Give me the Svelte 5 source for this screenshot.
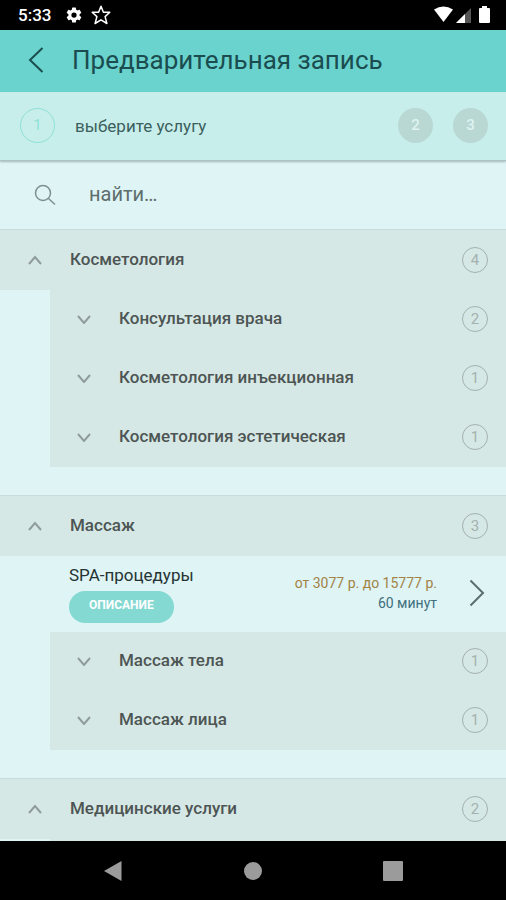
<script>
  let query = $state('');

  const groups = [
    {
      title: 'Косметология',
      count: 4,
      services: [],
      children: [
        { title: 'Консультация врача', count: 2 },
        { title: 'Косметология инъекционная', count: 1 },
        { title: 'Косметология эстетическая', count: 1 }
      ]
    },
    {
      title: 'Массаж',
      count: 3,
      services: [
        { title: 'SPA-процедуры', price: 'от 3077 р. до 15777 р.', time: '60 минут' }
      ],
      children: [
        { title: 'Массаж тела', count: 1 },
        { title: 'Массаж лица', count: 1 }
      ]
    },
    { title: 'Медицинские услуги', count: 2, services: [], children: [] }
  ];
</script>

<div class="app">
  <div class="status">
    <span class="clock">5:33</span>
    <svg class="gear" width="18" height="18" viewBox="0 0 24 24" aria-hidden="true">
      <path fill="#fff" fill-rule="evenodd" d="M19.4 13a7.500 7.500 0 0 0 0-2l2.100-1.650a.5.5 0 0 0 .12-.64l-2-3.460a.5.5 0 0 0-.6-.22l-2.490 1a7.300 7.300 0 0 0-1.690-.98l-.38-2.650A.5.5 0 0 0 14 2h-4a.5.5 0 0 0-.49.42l-.38 2.650c-.61.25-1.170.59-1.690.98l-2.490-1a.5.5 0 0 0-.6.22l-2 3.460a.5.5 0 0 0 .12.64L4.600 11a7.500 7.500 0 0 0 0 2l-2.110 1.650a.5.5 0 0 0-.12.64l2 3.460c.12.22.39.3.6.22l2.490-1c.52.4 1.080.73 1.690.98l.38 2.650c.04.24.25.42.49.42h4c.24 0 .45-.18.49-.42l.38-2.650c.61-.25 1.170-.59 1.690-.98l2.490 1c.22.08.48 0 .6-.22l2-3.460a.5.5 0 0 0-.12-.64zM12 15.500a3.500 3.500 0 1 1 0-7 3.500 3.500 0 0 1 0 7z" />
    </svg>
    <svg class="star" width="20" height="20" viewBox="0 0 20 20" aria-hidden="true">
      <path fill="none" stroke="#fff" stroke-width="1.500" stroke-linejoin="round" d="M10 1.200l2.400 6h6.400l-4.700 4.400 1.800 6.900-5.900-3.700-5.900 3.700 1.800-6.900L1.200 7.200h6.400z" />
    </svg>
    <svg class="signals" width="58" height="18" viewBox="0 0 58 18" aria-hidden="true">
      <path fill="#fff" d="M1 3.500Q10.500-2.500 20 3.500L10.500 16z" />
      <path fill="#555" d="M23 17L38 2v15z" />
      <path fill="#fff" d="M23 17l9-9v9z" />
      <path fill="#fff" d="M46 3q0-1 1-1h2V0h5v2h2q1 0 1 1v13q0 1-1 1h-9q-1 0-1-1z" />
    </svg>
  </div>

  <header class="header">
    <button class="back" aria-label="Назад">
      <svg width="16" height="28" viewBox="0 0 16 28">
        <path d="M14.500 2L2 14l12.500 12" />
      </svg>
    </button>
    <h1>Предварительная запись</h1>
  </header>

  <div class="steps">
    <span class="step current">1</span>
    <span class="step-title">выберите услугу</span>
    <span class="step">2</span>
    <span class="step">3</span>
  </div>

  <label class="search">
    <svg width="22" height="22" viewBox="0 0 22 22" aria-hidden="true">
      <circle cx="9" cy="9" r="7.500" />
      <path d="M14.500 14.500L21 20.500" />
    </svg>
    <input type="text" placeholder="найти…" aria-label="найти" bind:value={query} />
  </label>

  <main class="list">
    {#each groups as group}
      <section class="group">
        <button class="row head">
          <svg class="chevron" width="16" height="10" viewBox="0 0 16 10">
            <path d="M2 9l6-7 6 7" />
          </svg>
          <span class="name">{group.title}</span>
          <span class="count">{group.count}</span>
        </button>

        {#each group.services as service}
          <div class="service">
            <div class="info">
              <span class="service-name">{service.title}</span>
              <button class="about">ОПИСАНИЕ</button>
            </div>
            <div class="terms">
              <span class="price">{service.price}</span>
              <span class="time">{service.time}</span>
            </div>
            <button class="open" aria-label="Выбрать">
              <svg width="16" height="28" viewBox="0 0 16 28">
                <path d="M1.500 1.500L14 14 1.500 26.500" />
              </svg>
            </button>
          </div>
        {/each}

        <div class="nested">
          {#each group.children as child}
            <button class="row">
              <svg class="chevron" width="16" height="10" viewBox="0 0 16 10">
                <path d="M2 2l6 7 6-7" />
              </svg>
              <span class="name">{child.title}</span>
              <span class="count">{child.count}</span>
            </button>
          {/each}
        </div>
      </section>
    {/each}
  </main>

  <nav class="navbar">
    <button aria-label="Назад">
      <svg width="20" height="20" viewBox="0 0 20 20"><path d="M18.500 0v20L1 10z" /></svg>
    </button>
    <button aria-label="Домой">
      <svg width="20" height="20" viewBox="0 0 20 20"><circle cx="10" cy="10" r="9" /></svg>
    </button>
    <button aria-label="Недавние">
      <svg width="20" height="20" viewBox="0 0 20 20"><rect width="20" height="20" rx="1" /></svg>
    </button>
  </nav>
</div>

<style>
  :global(body) {
    margin: 0;
  }

  .app {
    display: flex;
    flex-direction: column;
    height: 100vh;
    overflow: hidden;
    background: #def4f5;
    color: #4a5554;
    font-family: Roboto, sans-serif;
  }

  button {
    padding: 0;
    border: 0;
    background: none;
    color: inherit;
    font-family: inherit;
    cursor: pointer;
  }

  svg {
    display: block;
    flex: none;
  }

  .status {
    display: flex;
    flex: none;
    align-items: center;
    box-sizing: border-box;
    height: 30px;
    padding: 0 15px 0 18px;
    background: #000;
    color: #fff;
  }

  .clock {
    font-size: 17px;
    font-weight: 500;
  }

  .gear {
    margin-left: 14px;
  }

  .star {
    margin-left: 8px;
  }

  .signals {
    margin-left: auto;
  }

  .header {
    display: flex;
    flex: none;
    align-items: center;
    box-sizing: border-box;
    height: 62px;
    padding: 0 0 2px 28px;
    background: #6ad3cd;
    color: #1b4c50;
  }

  .back {
    width: 44px;
  }

  .back path {
    fill: none;
    stroke: #1b4c50;
    stroke-width: 2;
  }

  h1 {
    margin: 0;
    font-size: 26px;
    font-weight: 400;
    line-height: 32px;
  }

  .steps {
    display: flex;
    flex: none;
    align-items: center;
    gap: 20px;
    box-sizing: border-box;
    height: 69px;
    padding: 0 18px 1px 20px;
    border-bottom: 1px solid #a9c4c4;
    background: #c7eeea;
    box-shadow: 0 1px 2px rgba(0, 0, 0, 0.25);
  }

  .step {
    flex: none;
    box-sizing: border-box;
    width: 35px;
    height: 35px;
    border-radius: 50%;
    background: #b9d8d4;
    color: #dff3f1;
    font-size: 15px;
    font-weight: 500;
    line-height: 35px;
    text-align: center;
  }

  .step.current {
    border: 1px solid #8fe0d8;
    background: none;
    color: #8fe0d8;
    font-weight: 400;
    line-height: 33px;
  }

  .step-title {
    flex: 1;
    color: #3c5f5e;
    font-size: 17px;
  }

  .search {
    display: flex;
    flex: none;
    align-items: center;
    height: 68px;
    padding: 0 34px;
  }

  .search svg {
    fill: none;
    stroke: #7d908f;
    stroke-width: 1.5;
  }

  input {
    flex: 1;
    min-width: 0;
    margin-left: 33px;
    padding: 0 0 2px;
    border: 0;
    outline: 0;
    background: none;
    color: #4f6463;
    font-family: inherit;
    font-size: 20px;
    line-height: 28px;
  }

  input::placeholder {
    color: #5d6e6d;
    opacity: 1;
  }

  .list {
    flex: 1;
    min-height: 0;
    overflow: hidden;
  }

  .group {
    margin-bottom: 28px;
  }

  .row {
    display: flex;
    align-items: center;
    box-sizing: border-box;
    width: 100%;
    height: 59px;
    padding: 0 18px 2px 26px;
    text-align: left;
  }

  .head {
    height: 61px;
    padding: 0 18px 0 27px;
    border-top: 1px solid #c9dcdb;
    background: #d6e8e5;
  }

  .chevron {
    margin-right: 27px;
    fill: none;
    stroke: #8f9c9a;
    stroke-width: 2;
  }

  .name {
    flex: 1;
    padding-bottom: 2px;
    color: #4d5554;
    font-size: 17px;
    font-weight: 500;
    line-height: 24px;
  }

  .count {
    flex: none;
    box-sizing: border-box;
    width: 26px;
    height: 26px;
    border: 1px solid #a3b1af;
    border-radius: 50%;
    color: #a3b1af;
    font-size: 15px;
    line-height: 24px;
    text-align: center;
  }

  .nested {
    min-height: 59px;
    margin-left: 50px;
    background: #d6e8e5;
  }

  .service {
    display: flex;
    align-items: center;
    box-sizing: border-box;
    height: 76px;
    padding: 0 21px 3px 69px;
  }

  .info {
    display: flex;
    flex: 1;
    flex-direction: column;
    align-items: flex-start;
    gap: 4px;
  }

  .service-name {
    color: #253333;
    font-size: 17px;
    line-height: 24px;
  }

  .about {
    height: 32px;
    padding: 0 20px 4px;
    border-radius: 16px;
    background: #84d9d2;
    color: #fff;
    font-size: 12px;
    font-weight: 700;
  }

  .terms {
    display: flex;
    flex-direction: column;
    font-size: 14px;
    line-height: 20px;
    text-align: right;
  }

  .price {
    color: #a38345;
  }

  .time {
    color: #3f6f7c;
  }

  .open {
    margin-left: 32px;
  }

  .open path {
    fill: none;
    stroke: #5b6e6d;
    stroke-width: 2;
  }

  .navbar {
    display: flex;
    flex: none;
    align-items: center;
    justify-content: center;
    gap: 120px;
    height: 59px;
    background: #000;
  }

  .navbar svg {
    fill: #9b9b9b;
  }
</style>
